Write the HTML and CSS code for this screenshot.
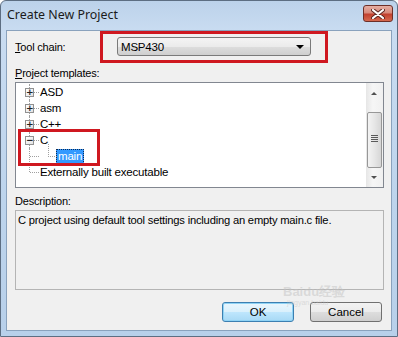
FILE: index.html
```html
<!DOCTYPE html>
<html>
<head>
  <title>Create New Project</title>
  <meta charset="UTF-8">
  <link rel="stylesheet" href="styles.css">
</head>
<body>
<div class="window">
  <div class="titlebar">
    <span class="title">Create New Project</span>
    <div class="closeBtn">
      <svg width="14" height="10" viewBox="0 0 14 10">
        <path d="M2 1 L12 9 M12 1 L2 9" stroke="#5b2520" stroke-width="4" stroke-linecap="round"/>
        <path d="M2 1 L12 9 M12 1 L2 9" stroke="#ffffff" stroke-width="2.2" stroke-linecap="round"/>
      </svg>
    </div>
  </div>

  <div class="content">
    <div class="chainRow">
      <span class="label chainLabel"><u>T</u>ool chain:</span>
      <div class="redBox">
        <div class="combo">
          <span>MSP430</span>
          <span class="comboArrow"></span>
        </div>
      </div>
    </div>

    <div class="label templatesLabel"><u>P</u>roject templates:</div>

    <div class="tree">
      <div class="treeRows">
        <div class="row"><span class="twist">+</span><span class="item">ASD</span></div>
        <div class="row"><span class="twist">+</span><span class="item">asm</span></div>
        <div class="row"><span class="twist">+</span><span class="item">C++</span></div>
        <div class="row"><span class="twist">&minus;</span><span class="item">C</span></div>
        <div class="row child"><span class="item selected">main</span></div>
        <div class="row last"><span class="item">Externally built executable</span></div>
      </div>
      <div class="scrollbar">
        <span class="arrowUp"></span>
        <div class="thumb"><span class="grip"></span></div>
        <span class="arrowDown"></span>
      </div>
      <div class="markC"></div>
    </div>

    <div class="label descLabel">Description:</div>
    <div class="desc">C project using default tool settings including an empty main.c file.</div>

    <div class="buttons">
      <div class="btn btnDefault">OK</div>
      <div class="btn">Cancel</div>
      <div class="watermark">Baidu经验<small>jingyan.baidu</small></div>
    </div>
  </div>
</div>
</body>
</html>
```

FILE: styles.css
```css
html, body {
  margin: 0;
  padding: 0;
  background: #ffffff;
}

.window {
  width: 398px;
  height: 337px;
  box-sizing: border-box;
  border: 1px solid #5d6e82;
  border-radius: 6px 6px 0 0;
  background: linear-gradient(to bottom, #bcd2ea 0px, #c9dcf1 30px, #bdd4ec 200px, #b8d0ea 100%);
  padding: 0 5px 5px 5px;
  font-family: "Liberation Sans", Arial, sans-serif;
  font-size: 11px;
  letter-spacing: -0.2px;
  color: #000;
}

.titlebar {
  height: 29px;
  display: flex;
  align-items: flex-start;
  justify-content: space-between;
}

.title {
  font-family: "Noto Sans", "Open Sans", sans-serif;
  font-size: 12.4px;
  letter-spacing: 0;
  margin: 5px 0 0 1px;
  color: #1b1b1b;
}

.closeBtn {
  width: 28px;
  height: 15px;
  margin: 4px -1px 0 0;
  border: 1px solid #6d2f28;
  border-radius: 3px;
  background: linear-gradient(to bottom, #e5aea3 0%, #d88a7c 45%, #c2412f 55%, #d5694f 100%);
  display: flex;
  align-items: center;
  justify-content: center;
}

.content {
  height: 301px;
  box-sizing: border-box;
  border: 1px solid #8aa2bd;
  background: #f0f0f0;
}

.label {
  line-height: 14px;
  padding-left: 8px;
}

.chainRow {
  display: flex;
  align-items: center;
  height: 32px;
}

.chainLabel {
  width: 85px;
}

.redBox {
  width: 228px;
  height: 32px;
  box-sizing: border-box;
  border: 3px solid #cf1820;
  padding: 3px 0 0 14px;
}

.combo {
  width: 194px;
  height: 19px;
  box-sizing: border-box;
  border: 1px solid #7a7a7a;
  border-radius: 3px;
  background: linear-gradient(to bottom, #f4f4f4 0%, #ebebeb 50%, #dddddd 51%, #cfcfcf 100%);
  display: flex;
  align-items: center;
  justify-content: space-between;
  padding: 0 6px 0 3px;
  font-size: 11.5px;
}

.comboArrow {
  width: 0;
  height: 0;
  border-left: 4px solid transparent;
  border-right: 4px solid transparent;
  border-top: 4px solid #000;
}

.templatesLabel {
  margin-top: 3px;
}

.tree {
  position: relative;
  margin: 2px 7px 0 8px;
  height: 106px;
  box-sizing: border-box;
  border: 1px solid #828790;
  background: #ffffff;
}

.treeRows {
  padding-top: 1px;
}

.row {
  position: relative;
  height: 16px;
  display: flex;
  align-items: center;
  padding-left: 9px;
}

.row::before {
  content: "";
  position: absolute;
  left: 13px;
  top: 0;
  bottom: 0;
  border-left: 1px dotted #a0a0a0;
}

.row.last::before {
  bottom: 8px;
}

.row::after {
  content: "";
  position: absolute;
  left: 14px;
  width: 9px;
  top: 8px;
  border-top: 1px dotted #a0a0a0;
}

.twist {
  position: relative;
  z-index: 1;
  width: 9px;
  height: 9px;
  box-sizing: border-box;
  border: 1px solid #919191;
  background: linear-gradient(to bottom right, #ffffff, #e2e2e2);
  font-size: 9px;
  line-height: 7px;
  text-align: center;
  color: #222;
  font-family: "DejaVu Sans", sans-serif;
  font-weight: bold;
  letter-spacing: 0;
}

.item {
  margin-left: 5px;
  padding: 0 1px;
  line-height: 15px;
  font-size: 11.5px;
}

.row.last .item {
  margin-left: 14px;
}

.row.child .item {
  margin-left: 31px;
}

.row.child .item::before {
  content: "";
  position: absolute;
  left: 32px;
  top: -4px;
  height: 12px;
  width: 8px;
  border-left: 1px dotted #a0a0a0;
  border-bottom: 1px dotted #a0a0a0;
}

.selected {
  background: #3399ff;
  color: #ffffff;
  outline: 1px dotted #0b2a55;
  outline-offset: -1px;
  padding: 0 2px;
}

.scrollbar {
  position: absolute;
  right: 0;
  top: 0;
  bottom: 0;
  width: 17px;
  background: linear-gradient(to right, #e6e6e6, #f6f6f6 40%, #f0f0f0);
}

.arrowUp, .arrowDown {
  position: absolute;
  left: 5px;
  width: 0;
  height: 0;
  border-left: 3px solid transparent;
  border-right: 3px solid transparent;
}

.arrowUp {
  top: 9px;
  border-bottom: 3px solid #505050;
}

.arrowDown {
  bottom: 8px;
  border-top: 3px solid #505050;
}

.thumb {
  position: absolute;
  left: 1px;
  top: 29px;
  width: 15px;
  height: 56px;
  box-sizing: border-box;
  border: 1px solid #979797;
  border-radius: 2px;
  background: linear-gradient(to right, #f3f3f3, #e6e6e6 50%, #d6d6d6);
}

.grip {
  position: absolute;
  left: 3px;
  top: 22px;
  width: 7px;
  height: 7px;
  background: repeating-linear-gradient(to bottom, #5a5a5a 0px, #5a5a5a 1px, transparent 1px, transparent 2px);
}

.markC {
  position: absolute;
  left: 2px;
  top: 46px;
  width: 82px;
  height: 37px;
  box-sizing: border-box;
  border: 3px solid #cf1820;
}

.descLabel {
  margin-top: 6px;
}

.desc {
  margin: 2px 7px 0 8px;
  height: 80px;
  box-sizing: border-box;
  border: 1px solid #b4b4b4;
  padding: 2px 0 0 2px;
  line-height: 14px;
  font-size: 11.2px;
}

.buttons {
  position: relative;
  display: flex;
  justify-content: flex-end;
  gap: 16px;
  margin: 12px 9px 0 0;
}

.btn {
  width: 72px;
  height: 20px;
  box-sizing: border-box;
  border: 1px solid #707070;
  border-radius: 3px;
  background: linear-gradient(to bottom, #f2f2f2 0%, #ebebeb 50%, #dddddd 51%, #cfcfcf 100%);
  text-align: center;
  line-height: 18px;
  font-size: 11.5px;
  letter-spacing: 0;
}

.btnDefault {
  border-color: #3c7fb1;
  box-shadow: inset 0 0 0 1px #8fd3f5;
  background: linear-gradient(to bottom, #eaf6fd 0%, #d9f0fc 50%, #bee6fd 51%, #a7d9f5 100%);
}

.watermark {
  position: absolute;
  left: 276px;
  top: -17px;
  color: rgba(195, 195, 195, 0.5);
  font-size: 13px;
  font-weight: bold;
  line-height: 14px;
  letter-spacing: 0;
  pointer-events: none;
}

.watermark small {
  display: block;
  font-size: 7px;
  line-height: 8px;
  font-weight: normal;
  margin-left: 4px;
}
```
